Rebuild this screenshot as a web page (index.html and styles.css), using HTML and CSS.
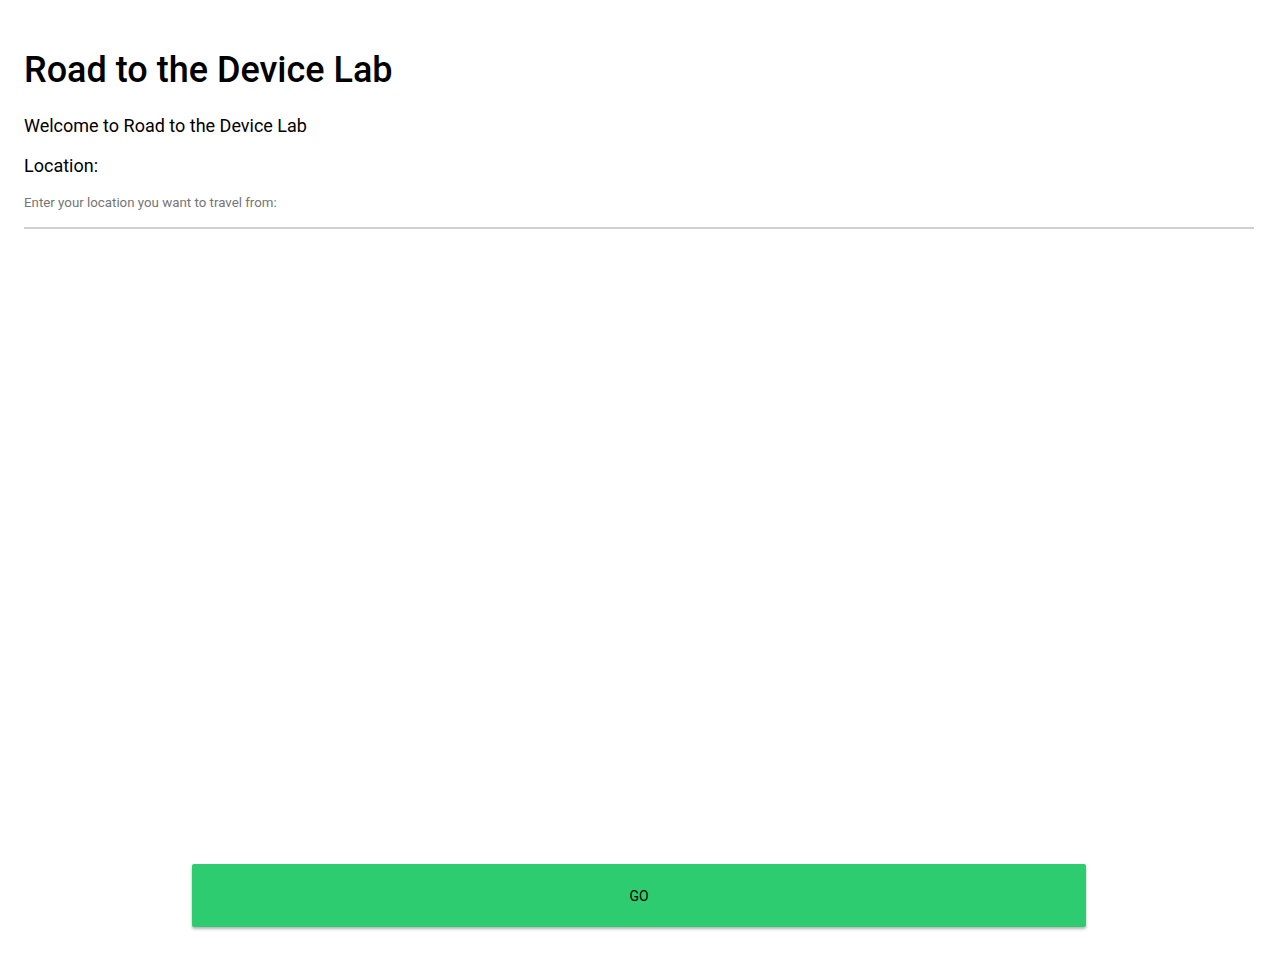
FILE: index.html
```html
<!DOCTYPE html>
<html>
<head>
<meta charset="utf-8">
<link rel="stylesheet" href="styles.css">
</head>
<body>
<div class="page">
  <h1 class="title">Road to the Device Lab</h1>
  <p class="welcome">Welcome to Road to the Device Lab</p>
  <p class="label">Location:</p>
  <div class="field">
    <label class="hint">Enter your location you want to travel from:</label>
    <div class="underline"></div>
  </div>
  <div class="actions">
    <button class="go">GO</button>
  </div>
</div>
</body>
</html>
```

FILE: styles.css
```css
html, body {
  margin: 0;
  padding: 0;
  background: #fff;
  font-family: Roboto, "Liberation Sans", sans-serif;
  color: #000;
}
.page {
  box-sizing: border-box;
  height: 100vh;
  padding: 24px 24px 32px;
  display: flex;
  flex-direction: column;
}
.title {
  margin: 24px 0 0;
  font-size: 36px;
  font-weight: 500;
  line-height: 44px;
}
.welcome {
  margin: 22px 0 0;
  font-size: 18px;
  line-height: 24px;
}
.label {
  margin: 16px 0 0;
  font-size: 18px;
  line-height: 24px;
}
.field {
  margin-top: 17px;
}
.hint {
  display: block;
  font-size: 13.3px;
  line-height: 16px;
  color: #757575;
}
.underline {
  margin-top: 16px;
  height: 2px;
  background: #cfcfcf;
}
.actions {
  margin-top: auto;
  display: flex;
  justify-content: center;
}
.go {
  width: 70vw;
  flex: none;
  height: 63px;
  border: none;
  border-radius: 2px;
  background: #2ecc71;
  color: #000;
  font-family: Roboto, sans-serif;
  font-size: 14px;
  box-shadow: 0 2px 3px rgba(0,0,0,0.3);
}
```
